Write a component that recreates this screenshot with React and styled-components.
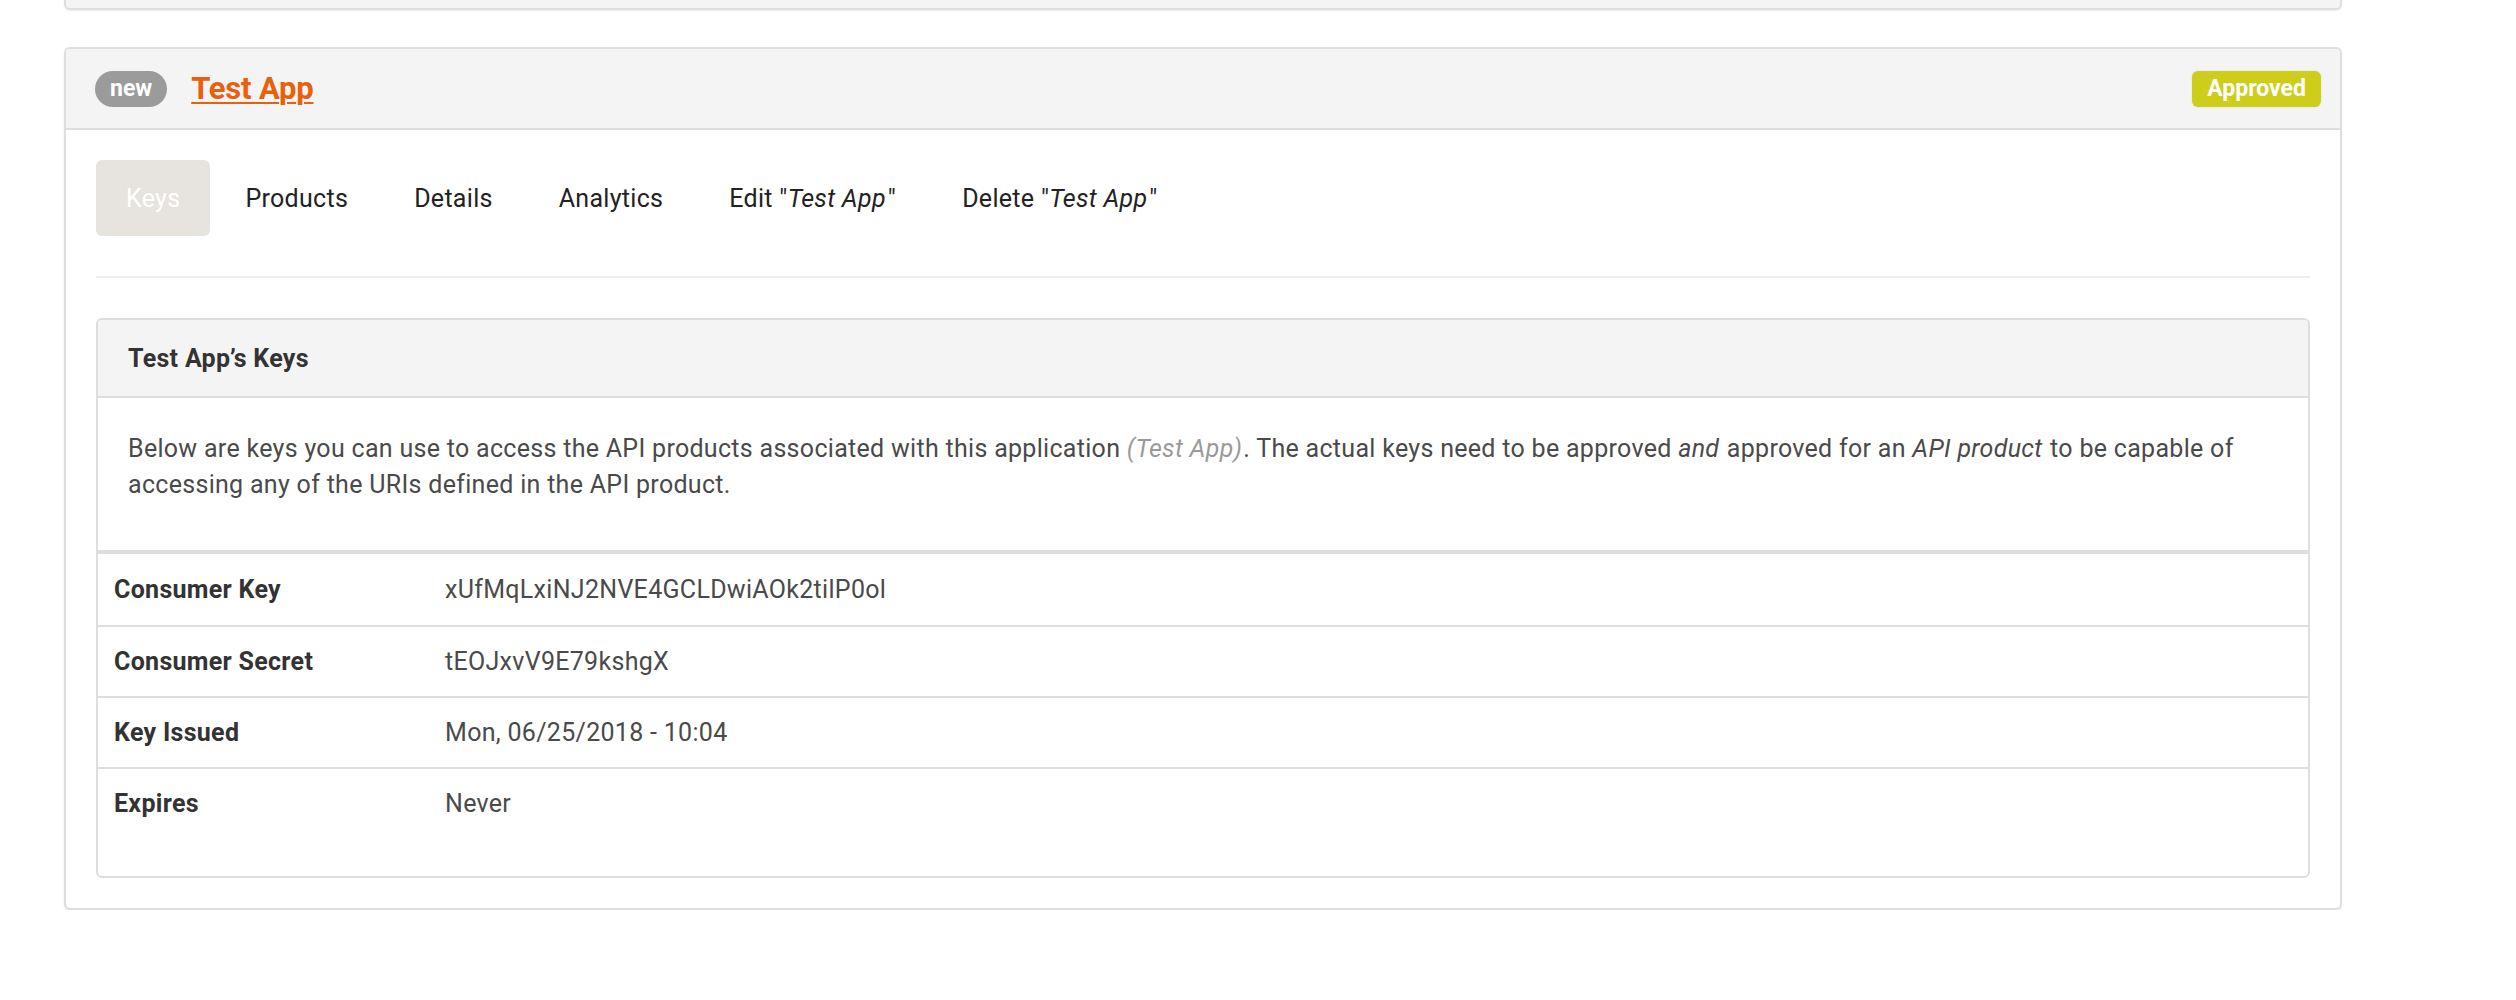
import React from "react";
import styled, { createGlobalStyle } from "styled-components";

const Global = createGlobalStyle`
  html, body { margin: 0; padding: 0; background: #fff; }
  body {
    font-family: Roboto, "Liberation Sans", Arial, sans-serif;
    color: #333;
    letter-spacing: 0.3px;
  }
  * { box-sizing: border-box; }
`;

const Page = styled.div`
  width: 2278px;
  margin-left: 64px;
  display: flex;
  flex-direction: column;
  gap: 37px;
`;

const PrevCard = styled.div`
  height: 10px;
  background: #f4f4f4;
  border: 2px solid #dedede;
  border-top: none;
  border-radius: 0 0 6px 6px;
  box-shadow: 0 1px 2px rgba(0, 0, 0, 0.08);
`;

const Card = styled.section`
  border: 2px solid #dedede;
  border-radius: 6px;
  background: #fff;
  box-shadow: 0 1px 2px rgba(0, 0, 0, 0.08);
  overflow: hidden;
`;

const CardHeader = styled.header`
  height: 81px;
  background: #f4f4f4;
  border-bottom: 2px solid #dedede;
  display: flex;
  align-items: center;
  padding: 0 19px 0 29px;
  gap: 24px;
`;

const Pill = styled.span`
  display: inline-flex;
  align-items: center;
  justify-content: center;
  height: 36px;
  padding: 0 ${(p) => p.$px}px;
  border-radius: ${(p) => p.$radius}px;
  background: ${(p) => p.$bg};
  color: #fff;
  font-weight: 700;
  font-size: 23px;
  line-height: 1;
  letter-spacing: 0;
  box-shadow: ${(p) => (p.$shadow ? "0 0 3px rgba(0,0,0,0.08)" : "none")};
`;

const TitleLink = styled.a`
  color: #e8600c;
  font-size: 31px;
  font-weight: 700;
  text-decoration: underline;
  text-decoration-thickness: 2px;
  text-underline-offset: 3px;
  letter-spacing: -0.2px;
`;

const Spacer = styled.div`
  flex: 1;
`;

const CardBody = styled.div`
  padding: 30px;
`;

const Tabs = styled.nav`
  display: flex;
  gap: 4px;
  padding-bottom: 40px;
  border-bottom: 2px solid #eeeeee;
  margin-bottom: 40px;
`;

const Tab = styled.a`
  display: flex;
  align-items: center;
  height: 76px;
  padding: 0 ${(p) => (p.$active ? 30 : 31)}px;
  border-radius: 6px;
  font-size: 25px;
  letter-spacing: 0.3px;
  color: ${(p) => (p.$active ? "#ffffff" : "#222222")};
  background: ${(p) => (p.$active ? "#e7e3de" : "transparent")};
  white-space: pre;
  em { font-style: italic; padding-right: 2px; }
`;

const Panel = styled.div`
  border: 2px solid #dedede;
  border-radius: 6px;
  overflow: hidden;
`;

const PanelHeading = styled.h3`
  margin: 0;
  height: 78px;
  display: flex;
  align-items: center;
  padding: 0 30px;
  background: #f4f4f4;
  border-bottom: 2px solid #dedede;
  font-size: 25px;
  font-weight: 700;
  color: #333;
`;

const PanelText = styled.p`
  margin: 0;
  padding: 33px 30px 47px;
  font-size: 25px;
  line-height: 36px;
  color: #4a4a4a;
  border-bottom: 2px solid #dedede;
  em { font-style: italic; padding-right: 1px; }
`;

const Muted = styled.em`
  color: #9a9a9a;
`;

const KeyTable = styled.div`
  border-top: 2px solid #dedede;
  padding-bottom: 38px;
`;

const Row = styled.div`
  display: grid;
  grid-template-columns: 331px 1fr;
  height: 71px;
  align-items: center;
  border-top: ${(p) => (p.$first ? "none" : "2px solid #dedede")};
`;

const Label = styled.div`
  padding-left: 16px;
  font-size: 25px;
  font-weight: 700;
  color: #333;
`;

const Value = styled.div`
  padding-left: 16px;
  font-size: 25px;
  color: #4a4a4a;
`;

const rows = [
  ["Consumer Key", "xUfMqLxiNJ2NVE4GCLDwiAOk2tilP0ol"],
  ["Consumer Secret", "tEOJxvV9E79kshgX"],
  ["Key Issued", "Mon, 06/25/2018 - 10:04"],
  ["Expires", "Never"],
];

export default function App() {
  return (
    <>
      <Global />
      <Page>
        <PrevCard />
        <Card>
          <CardHeader>
            <Pill $bg="#9b9b9b" $px={15} $radius={18}>new</Pill>
            <TitleLink href="#">Test App</TitleLink>
            <Spacer />
            <Pill $bg="#cdcd1a" $px={15} $radius={6} $shadow>Approved</Pill>
          </CardHeader>
          <CardBody>
            <Tabs>
              <Tab $active>Keys</Tab>
              <Tab>Products</Tab>
              <Tab>Details</Tab>
              <Tab>Analytics</Tab>
              <Tab>Edit "<em>Test App</em>"</Tab>
              <Tab>Delete "<em>Test App</em>"</Tab>
            </Tabs>
            <Panel>
              <PanelHeading>Test App’s Keys</PanelHeading>
              <PanelText>
                Below are keys you can use to access the API products associated with this application{" "}
                <Muted>(Test App)</Muted>. The actual keys need to be approved <em>and</em> approved for an{" "}
                <em>API product</em> to be capable of accessing any of the URIs defined in the API product.
              </PanelText>
              <KeyTable>
                {rows.map(([k, v], i) => (
                  <Row key={k} $first={i === 0}>
                    <Label>{k}</Label>
                    <Value>{v}</Value>
                  </Row>
                ))}
              </KeyTable>
            </Panel>
          </CardBody>
        </Card>
      </Page>
    </>
  );
}
